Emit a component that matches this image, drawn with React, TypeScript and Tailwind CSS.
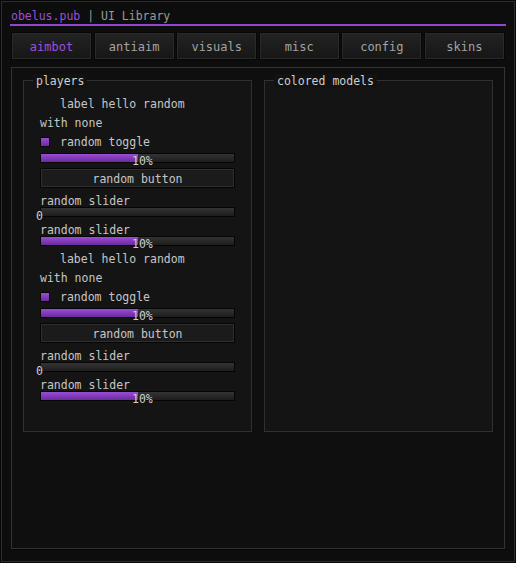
import React from "react";

const font = { fontFamily: '"DejaVu Sans Mono", "Liberation Mono", monospace' };

const tabs = ["aimbot", "antiaim", "visuals", "misc", "config", "skins"];

function Bar({ fill, label, zero }: { fill: number; label?: string; zero?: boolean }) {
  return (
    <div className="relative h-[10px] border border-[#050505] bg-gradient-to-b from-[#343434] to-[#1d1d1d]">
      <div
        className="h-full bg-gradient-to-b from-[#9a4cd6] to-[#6b2b9e]"
        style={{ width: `${fill}%` }}
      />
      {label && (
        <span className="absolute left-[91px] top-0 text-[11.5px] leading-[14px] text-[#cfcfcf]">
          {label}
        </span>
      )}
      {zero && (
        <span className="absolute left-[-5px] top-px text-[11.5px] leading-[14px] text-[#cfcfcf]">
          0
        </span>
      )}
    </div>
  );
}

function Slider({ value }: { value: "0" | "10%" }) {
  return (
    <div className="mt-[5px]">
      <div className="h-[14px] leading-[14px] pt-px">random slider</div>
      {value === "0" ? <Bar fill={0} zero /> : <Bar fill={50} label="10%" />}
    </div>
  );
}

function Block({ first }: { first?: boolean }) {
  return (
    <div className={first ? "" : "mt-[3px]"}>
      <div className="h-[18px] flex items-center pt-[4px] pl-[20px]">label hello random</div>
      <div className="h-[19px] flex items-center pt-[4px]">with none</div>
      <div className="h-[20px] flex items-center">
        <div className="w-[10px] h-[10px] mt-[1px] border border-[#050505] bg-gradient-to-b from-[#9a4cd6] to-[#6b2b9e]" />
        <span className="ml-[10px] pt-[4px]">random toggle</span>
      </div>
      <div className="mt-[2px]">
        <Bar fill={50} label="10%" />
      </div>
      <div className="mt-[5px] h-[20px] pt-[3px] border border-[#050505] bg-[#1b1b1b] shadow-[inset_0_0_0_1px_#2f2f2f] flex items-center justify-center">
        random button
      </div>
      <Slider value="0" />
      <Slider value="10%" />
    </div>
  );
}

function Group({ title, children }: { title: string; children?: React.ReactNode }) {
  return (
    <div className="relative flex-1 border border-[#303030] bg-[#141414]">
      <span className="absolute left-[9px] top-[-7px] px-[3px] bg-[#121212] leading-[14px] text-[#cfcfcf]">
        {title}
      </span>
      {children}
    </div>
  );
}

export default function App() {
  return (
    <div className="w-[516px] h-[563px] bg-[#070707] p-px text-[11.5px] text-[#c6c6c6]" style={font}>
      <div className="w-[514px] h-[561px] border border-[#2e2e2e] bg-[#0d0d0d] px-[8px] pt-[5px] flex flex-col">
        <div className="h-[16px] leading-[16px] pl-px pt-px">
          <span className="text-[#9c50d8]">obelus.pub</span>
          <span className="text-[#9a9a9a]"> | UI Library</span>
        </div>
        <div className="mt-px h-[2px] bg-[#9246d0]" />
        <div className="mt-[6px] mx-px flex gap-[1.5px]">
          {tabs.map((t, i) => (
            <div
              key={t}
              className={`flex-1 h-[28px] pt-[2px] border border-[#070707] bg-gradient-to-b from-[#232323] to-[#161616] shadow-[inset_0_0_0_1px_#2a2a2a] flex items-center justify-center text-[12px] ${
                i === 0 ? "text-[#9c50d8]" : "text-[#a3a3a3]"
              }`}
            >
              {t}
            </div>
          ))}
        </div>
        <div className="mt-[7px] mx-px h-[482px] border border-[#333333] bg-[#0f0f0f] shadow-[0_1px_0_#050505] pt-[12px] px-[11px]">
          <div className="flex gap-[12px] h-[352px]">
            <Group title="players">
              <div className="pt-[13px] px-[16px]">
                <Block first />
                <Block />
              </div>
            </Group>
            <Group title="colored models" />
          </div>
        </div>
      </div>
    </div>
  );
}
